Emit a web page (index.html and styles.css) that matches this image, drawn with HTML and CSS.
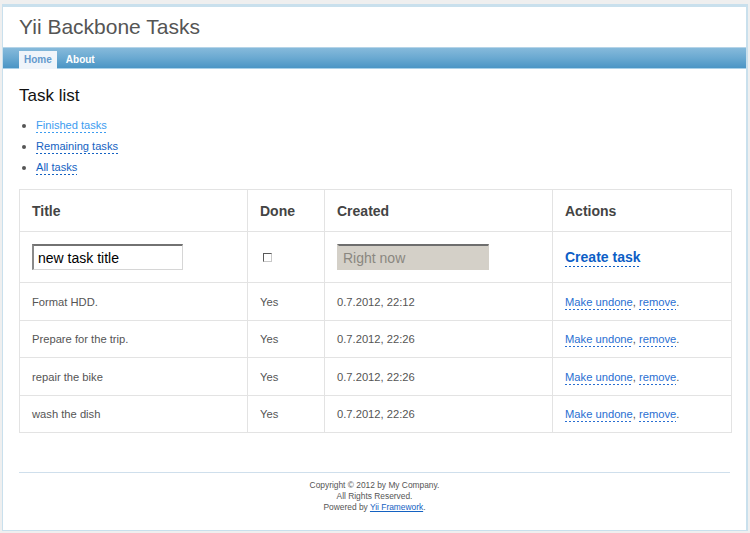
FILE: index.html
```html
<!DOCTYPE html>
<html lang="en">
<head>
<meta charset="utf-8">
<title>Yii Backbone Tasks</title>
<link rel="stylesheet" href="styles.css">
</head>
<body>
<div class="page">
  <div class="header">
    <div class="logo">Yii Backbone Tasks</div>
  </div>
  <div class="mainmenu">
    <ul class="menu-list">
      <li class="menu-item active"><a href="#">Home</a></li>
      <li class="menu-item"><a href="#">About</a></li>
    </ul>
  </div>
  <div class="content">
    <h2 class="page-title">Task list</h2>
    <ul class="filters">
      <li><a class="dlink light" href="#">Finished tasks</a></li>
      <li><a class="dlink" href="#">Remaining tasks</a></li>
      <li><a class="dlink" href="#">All tasks</a></li>
    </ul>
    <table class="tasks">
      <colgroup>
        <col class="c-title"><col class="c-done"><col class="c-created"><col class="c-actions">
      </colgroup>
      <thead>
        <tr class="head-row"><th>Title</th><th>Done</th><th>Created</th><th>Actions</th></tr>
      </thead>
      <tbody>
        <tr class="new-row">
          <td><input class="txt" type="text" value="new task title"></td>
          <td><input class="chk" type="checkbox"></td>
          <td><input class="txt disabled" type="text" value="Right now" disabled></td>
          <td><a class="dlink create" href="#">Create task</a></td>
        </tr>
        <tr class="row r1"><td>Format HDD.</td><td>Yes</td><td>0.7.2012, 22:12</td><td><a class="dlink act" href="#">Make undone</a>, <a class="dlink act" href="#">remove</a>.</td></tr>
        <tr class="row r2"><td>Prepare for the trip.</td><td>Yes</td><td>0.7.2012, 22:26</td><td><a class="dlink act" href="#">Make undone</a>, <a class="dlink act" href="#">remove</a>.</td></tr>
        <tr class="row r3"><td>repair the bike</td><td>Yes</td><td>0.7.2012, 22:26</td><td><a class="dlink act" href="#">Make undone</a>, <a class="dlink act" href="#">remove</a>.</td></tr>
        <tr class="row r4"><td>wash the dish</td><td>Yes</td><td>0.7.2012, 22:26</td><td><a class="dlink act" href="#">Make undone</a>, <a class="dlink act" href="#">remove</a>.</td></tr>
      </tbody>
    </table>
  </div>
  <div class="footer">
    Copyright &copy; 2012 by My Company.<br>
    All Rights Reserved.<br>
    Powered by <a class="flink" href="#">Yii Framework</a>.
  </div>
</div>
</body>
</html>
```
FILE: styles.css
```css
html, body {
  margin: 0;
  padding: 0;
}
body {
  background: #efefef;
  color: #555;
  font-family: "Liberation Sans", Arial, sans-serif;
  font-size: 12px;
}
.page {
  margin: 4px 2px 4px 2px;
  background: #fff;
  border: 1px solid #c9e0ed;
  border-right-width: 2px;
}
.header {
  border-top: 2px solid #c9e0ed;
}
.logo {
  height: 40px;
  line-height: 40px;
  padding: 0 16px;
  font-size: 21px;
  color: #555;
}
.mainmenu {
  height: 20px;
  border-top: 1px solid #b5d4e8;
  border-bottom: 1px solid #a9d0e8;
  background: linear-gradient(to bottom, #86badb 0%, #6aa9d1 50%, #4b95c5 100%);
}
.menu-list {
  list-style: none;
  margin: 0;
  padding: 3px 0 0 16px;
  display: flex;
  gap: 4px;
}
.menu-item a {
  display: block;
  height: 18px;
  line-height: 18px;
  padding: 0 5px;
  font-size: 10px;
  font-weight: bold;
  color: #fff;
  text-decoration: none;
}
.menu-item.active a {
  background: #eff4fa;
  color: #6399cd;
}
.content {
  padding: 0 16px;
}
.page-title {
  margin: 17px 0 0 0;
  font-size: 17px;
  line-height: 20px;
  font-weight: normal;
  color: #111;
}
.filters {
  margin: 9px 0 11px 0;
  padding: 0 0 0 17px;
}
.filters li {
  height: 21px;
  line-height: 21px;
  font-size: 12.5px;
  color: #555;
}
.filters .dlink {
  font-size: 11.1px;
}
.dlink {
  color: #1462c2;
  text-decoration: none;
  padding-bottom: 2px;
  background: repeating-linear-gradient(to right, currentColor 0 2px, transparent 2px 4px) left bottom / 100% 1px no-repeat;
}
.dlink.light {
  color: #3c9cf0;
}
.tasks {
  width: 712px;
  table-layout: fixed;
  border-collapse: collapse;
  border: 1px solid #e3e3e3;
}
.c-title { width: 228px; }
.c-done { width: 77px; }
.c-created { width: 228px; }
.c-actions { width: 179px; }
.tasks th, .tasks td {
  border: 1px solid #e3e3e3;
  padding: 0 0 0 12px;
  text-align: left;
  vertical-align: middle;
}
.tasks th {
  font-size: 14px;
  font-weight: bold;
  color: #444;
}
.head-row { height: 42px; }
.new-row { height: 51px; }
.r1 { height: 38px; }
.r2 { height: 37px; }
.r3 { height: 38px; }
.r4 { height: 37px; }
.tasks td {
  font-size: 11.2px;
  color: #555;
}
.txt {
  box-sizing: border-box;
  display: block;
  width: 151px;
  height: 26px;
  margin: 0;
  padding: 0 0 0 4px;
  font-family: "Liberation Sans", Arial, sans-serif;
  font-size: 14px;
  color: #000;
  background: #fff;
  border-style: solid;
  border-width: 2px 1px 1px 2px;
  border-color: #727272 #d6d6d6 #d6d6d6 #8a8a8a;
  outline: none;
}
.txt.disabled {
  width: 152px;
  background: #d4d0c8;
  color: #8a8780;
  padding-left: 4px;
  border-color: #6e6e6e #d4d0c8 #d4d0c8 #d4d0c8;
}
.chk {
  -webkit-appearance: none;
  appearance: none;
  display: block;
  box-sizing: border-box;
  width: 9px;
  height: 9px;
  margin: 0 0 0 3px;
  border-style: solid;
  border-width: 1px;
  border-color: #5a5a5a #c8c8c8 #c8c8c8 #5a5a5a;
  background: #fff;
}
.create {
  font-size: 14px;
  font-weight: bold;
  color: #0d5ec6;
}
.act {
  color: #2a6fd2;
}
.footer {
  margin: 39px 16px 0 16px;
  padding: 7px 0 17px 0;
  border-top: 1px solid #cfdfec;
  text-align: center;
  font-size: 8.4px;
  line-height: 11px;
  color: #555;
}
.flink {
  color: #1462c2;
  text-decoration: underline;
}
```
